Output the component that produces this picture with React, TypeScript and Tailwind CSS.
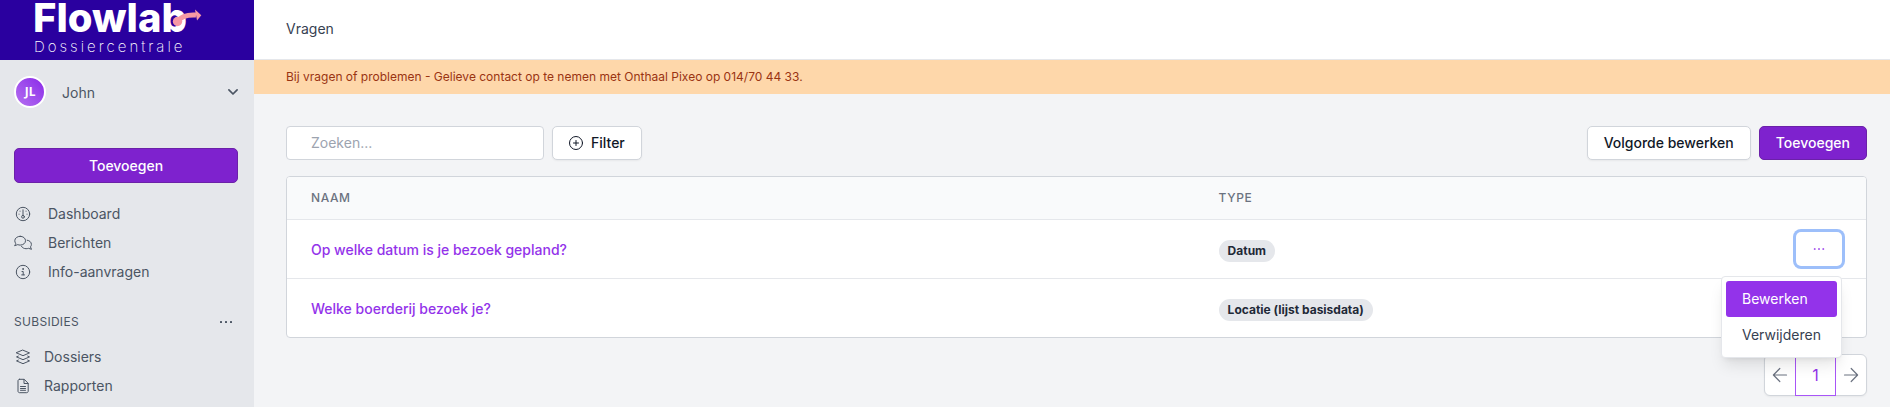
import React from 'react';

interface IconProps {
    className?: string;
}

const strokeProps = {
    fill: 'none',
    stroke: 'currentColor',
    strokeWidth: 1,
    strokeLinecap: 'round' as const,
    strokeLinejoin: 'round' as const,
};

const GaugeIcon: React.FC<IconProps> = ({ className }) => (
    <svg viewBox="0 0 16 16" className={className} aria-hidden="true" {...strokeProps}>
        <circle cx="8" cy="8" r="6.7" />
        <circle cx="8" cy="10.8" r="1.4" />
        <path d="M8 9.4V3.8M4 8.2h.1M12 8.2h.1M5 5.2h.1M11 5.2h.1" />
    </svg>
);

const CommentsIcon: React.FC<IconProps> = ({ className }) => (
    <svg viewBox="0 0 18 16" className={className} aria-hidden="true" {...strokeProps}>
        <path d="M6.2 1.3c3 0 5.3 1.9 5.3 4.4s-2.3 4.4-5.3 4.4c-.9 0-1.7-.2-2.4-.5L.6 10.7c.6-.7 1-1.6 1.1-2.4C1.1 7.6.8 6.7.8 5.7c0-2.5 2.4-4.4 5.4-4.4z" />
        <path d="M13.2 5.2c2.4.3 4.2 2 4.2 4.2 0 .9-.3 1.7-.9 2.4.1.8.5 1.7 1.1 2.5l-3.2-1c-.7.3-1.5.4-2.3.4-2 0-3.7-.9-4.6-2.3" />
    </svg>
);

const InfoIcon: React.FC<IconProps> = ({ className }) => (
    <svg viewBox="0 0 16 16" className={className} aria-hidden="true" {...strokeProps}>
        <circle cx="8" cy="8" r="6.7" />
        <path d="M7 7.5h1.2v3.3M6.7 10.9h2.8" />
        <circle cx="8" cy="5" r=".4" fill="currentColor" />
    </svg>
);

const LayersIcon: React.FC<IconProps> = ({ className }) => (
    <svg viewBox="0 0 16 16" className={className} aria-hidden="true" {...strokeProps}>
        <path d="M8 1.2l6.5 2.7L8 6.7 1.5 3.9z" />
        <path d="M3.3 7.1l-1.8.8L8 10.7l6.5-2.8-1.8-.8" />
        <path d="M3.3 11.1l-1.8.8L8 14.7l6.5-2.8-1.8-.8" />
    </svg>
);

const FileIcon: React.FC<IconProps> = ({ className }) => (
    <svg viewBox="0 0 16 16" className={className} aria-hidden="true" {...strokeProps}>
        <path d="M4.5 1.3h4.7l4 4v7.9c0 .8-.6 1.5-1.5 1.5H4.5c-.8 0-1.5-.7-1.5-1.5V2.8c0-.8.7-1.5 1.5-1.5z" />
        <path d="M9 1.5v4h4M5.5 8.5h5M5.5 10.5h5M5.5 12.3h5" />
    </svg>
);

const CirclePlusIcon: React.FC<IconProps> = ({ className }) => (
    <svg viewBox="1 1 14 14" className={className} aria-hidden="true" {...strokeProps}>
        <circle cx="8" cy="8" r="6.5" />
        <path d="M5.5 8h5M8 5.5v5" />
    </svg>
);

const DotsIcon: React.FC<IconProps> = ({ className }) => (
    <svg viewBox="0 0 14 14" className={className} aria-hidden="true" fill="currentColor">
        <rect x="1" y="6" width="2" height="2" rx=".5" />
        <rect x="6" y="6" width="2" height="2" rx=".5" />
        <rect x="11" y="6" width="2" height="2" rx=".5" />
    </svg>
);

const ChevronIcon: React.FC<IconProps> = ({ className }) => (
    <svg viewBox="0 0 10 10" className={className} aria-hidden="true" {...strokeProps} strokeWidth={1.7}>
        <path d="M.9 2.8L5 7l4.100-4.200" />
    </svg>
);

const ArrowIcon: React.FC<IconProps> = ({ className }) => (
    <svg viewBox="0 0 16 16" className={className} aria-hidden="true" {...strokeProps} strokeWidth={1.2}>
        <path d="M1.5 8h13M7.8 1.5L1.4 8l6.4 6.5" />
    </svg>
);

const Logo: React.FC = () => (
    <a href="#" className="relative flex h-15 flex-col bg-[#2a009f] pl-[33px] text-white">
        <span className="text-[40px] leading-9 font-extrabold">Flowlab</span>
        <span className="pl-px text-[15px] leading-[22px] font-extralight tracking-[3px]">Dossiercentrale</span>
        <svg viewBox="0 0 30 20" className="absolute top-2 left-[172px] h-5 w-[30px]" aria-hidden="true">
            <circle cx="5.5" cy="13.5" r="4.7" fill="#f799a4" />
            <path d="M5.5 13C10 7.5 16 6.5 24 7" fill="none" stroke="#f799a4" strokeWidth="5" />
            <path d="M23 1.5l6.3 5.7L25 12.5z" fill="#f799a4" />
        </svg>
    </a>
);

const mainLinks = [
    { label: 'Dashboard', Icon: GaugeIcon },
    { label: 'Berichten', Icon: CommentsIcon },
    { label: 'Info-aanvragen', Icon: InfoIcon },
];

const subsidyLinks = [
    { label: 'Dossiers', Icon: LayersIcon },
    { label: 'Rapporten', Icon: FileIcon },
];

const Sidebar: React.FC = () => (
    <aside className="w-[254px] shrink-0 bg-[#e5e7eb] text-[#4b5563]">
        <Logo />
        <div className="pt-4 pr-4 pl-3.5">
            <button type="button" className="flex w-full items-center">
                <span className="flex size-8 items-center justify-center rounded-full border-2 border-white bg-linear-to-bl from-[#8b22e8] to-[#b56df0] font-['Noto_Sans'] text-xs font-bold text-white">
                    JL
                </span>
                <span className="ml-4 flex-1 pt-0.5 text-left">John</span>
                <ChevronIcon className="size-2.5" />
            </button>
            <button
                type="button"
                className="mt-10 h-[35px] w-full rounded-[5px] border border-[#6b21a8] bg-[#7e22ce] font-medium text-white"
            >
                Toevoegen
            </button>
            <nav className="mt-4">
                {mainLinks.map(({ label, Icon }) => (
                    <a key={label} href="#" className="flex h-[29px] items-center gap-4">
                        <Icon className="h-4 w-[18px]" />
                        {label}
                    </a>
                ))}
            </nav>
            <div className="mt-6 flex h-6 items-center justify-between pr-[5px] text-xs tracking-wide">
                <h2>SUBSIDIES</h2>
                <button type="button" aria-label="Subsidies opties">
                    <DotsIcon className="size-3.5" />
                </button>
            </div>
            <nav className="mt-2">
                {subsidyLinks.map(({ label, Icon }) => (
                    <a key={label} href="#" className="flex h-[29px] items-center gap-3">
                        <Icon className="h-4 w-[18px]" />
                        {label}
                    </a>
                ))}
            </nav>
        </div>
    </aside>
);

const RowMenu: React.FC = () => (
    <div className="absolute top-full right-0 z-10 mt-2.5 flex w-[121px] flex-col rounded-[4px] border border-[#e5e7eb] bg-white p-1 text-left text-[#374151] shadow-lg">
        <button type="button" className="h-9 rounded-[3px] bg-[#9333ea] px-4 text-left text-white">
            Bewerken
        </button>
        <button type="button" className="h-9 px-4 text-left">
            Verwijderen
        </button>
    </div>
);

const rows = [
    { name: 'Op welke datum is je bezoek gepland?', type: 'Datum', open: true },
    { name: 'Welke boerderij bezoek je?', type: 'Locatie (lijst basisdata)', open: false },
];

const QuestionTable: React.FC = () => (
    <div className="mt-4 rounded-[4px] border border-[#d1d5db] bg-white">
        <table className="w-full table-fixed text-left">
            <thead className="bg-[#f9fafb] text-xs tracking-wider text-[#6b7280]">
                <tr className="h-[42px] border-b border-[#e5e7eb]">
                    <th className="w-[59%] rounded-tl-[3px] pl-6 font-medium">NAAM</th>
                    <th className="font-medium">TYPE</th>
                    <th className="w-36 rounded-tr-[3px]" aria-label="Acties" />
                </tr>
            </thead>
            <tbody>
                {rows.map((row) => (
                    <tr key={row.name} className="h-[59px] border-b border-[#e5e7eb] last:border-b-0">
                        <td className="pt-0.5 pl-6">
                            <a href="#" className="font-medium text-[#9333ea]">{row.name}</a>
                        </td>
                        <td className="pt-1">
                            <span className="inline-flex h-[22px] items-center rounded-full bg-[#e5e7eb] px-[9px] align-middle text-xs font-bold text-[#1f2937]">
                                {row.type}
                            </span>
                        </td>
                        <td className="pr-6">
                            {row.open && (
                                <div className="relative ml-auto w-[46px]">
                                    <button
                                        type="button"
                                        aria-label="Opties"
                                        className="flex h-[34px] w-full items-center justify-center rounded-[5px] text-[#9333ea] ring-3 ring-[#9dbffa]"
                                    >
                                        <DotsIcon className="size-3" />
                                    </button>
                                    <RowMenu />
                                </div>
                            )}
                        </td>
                    </tr>
                ))}
            </tbody>
        </table>
    </div>
);

const Pagination: React.FC = () => (
    <nav className="mt-4 flex justify-end">
        <div className="flex h-[42px] items-stretch rounded-md border border-[#d1d5db] bg-white text-[#6b7280] shadow-xs">
            <button type="button" aria-label="Vorige" className="px-[7px]">
                <ArrowIcon className="size-4" />
            </button>
            <button type="button" className="-my-px w-[41px] border border-[#a855f7] text-base text-[#9333ea]">
                1
            </button>
            <button type="button" aria-label="Volgende" className="px-[7px]">
                <ArrowIcon className="size-4 rotate-180" />
            </button>
        </div>
    </nav>
);

const App: React.FC = () => (
    <div className="flex min-h-screen bg-[#f3f4f6] font-['Inter',sans-serif] text-sm">
        <Sidebar />
        <div className="min-w-0 flex-1">
            <header className="h-15 border-b border-[#e5e7eb] bg-white px-8 pt-[19px] text-[#374151]">
                <h1>Vragen</h1>
            </header>
            <p className="flex h-[34px] items-center bg-[#fed7aa] px-8 text-xs text-[#9a3412]">
                Bij vragen of problemen - Gelieve contact op te nemen met Onthaal Pixeo op 014/70 44 33.
            </p>
            <main className="pt-8 pr-[23px] pl-8">
                <div className="flex h-[34px] items-stretch gap-2 font-medium text-[#111827]">
                    <input
                        type="search"
                        aria-label="Zoeken"
                        placeholder="Zoeken..."
                        className="w-[258px] rounded-[4px] border border-[#d1d5db] bg-white px-6 font-normal placeholder:text-[#9ca3af]"
                    />
                    <button
                        type="button"
                        className="flex items-center gap-2 rounded-[5px] border border-[#d1d5db] bg-white px-4 shadow-xs"
                    >
                        <CirclePlusIcon className="size-3.5" />
                        Filter
                    </button>
                    <button
                        type="button"
                        className="ml-auto rounded-[5px] border border-[#d1d5db] bg-white px-4 shadow-xs"
                    >
                        Volgorde bewerken
                    </button>
                    <button
                        type="button"
                        className="rounded-[5px] border border-[#6b21a8] bg-[#7e22ce] px-4 text-white"
                    >
                        Toevoegen
                    </button>
                </div>
                <QuestionTable />
                <Pagination />
            </main>
        </div>
    </div>
);

export default App;
